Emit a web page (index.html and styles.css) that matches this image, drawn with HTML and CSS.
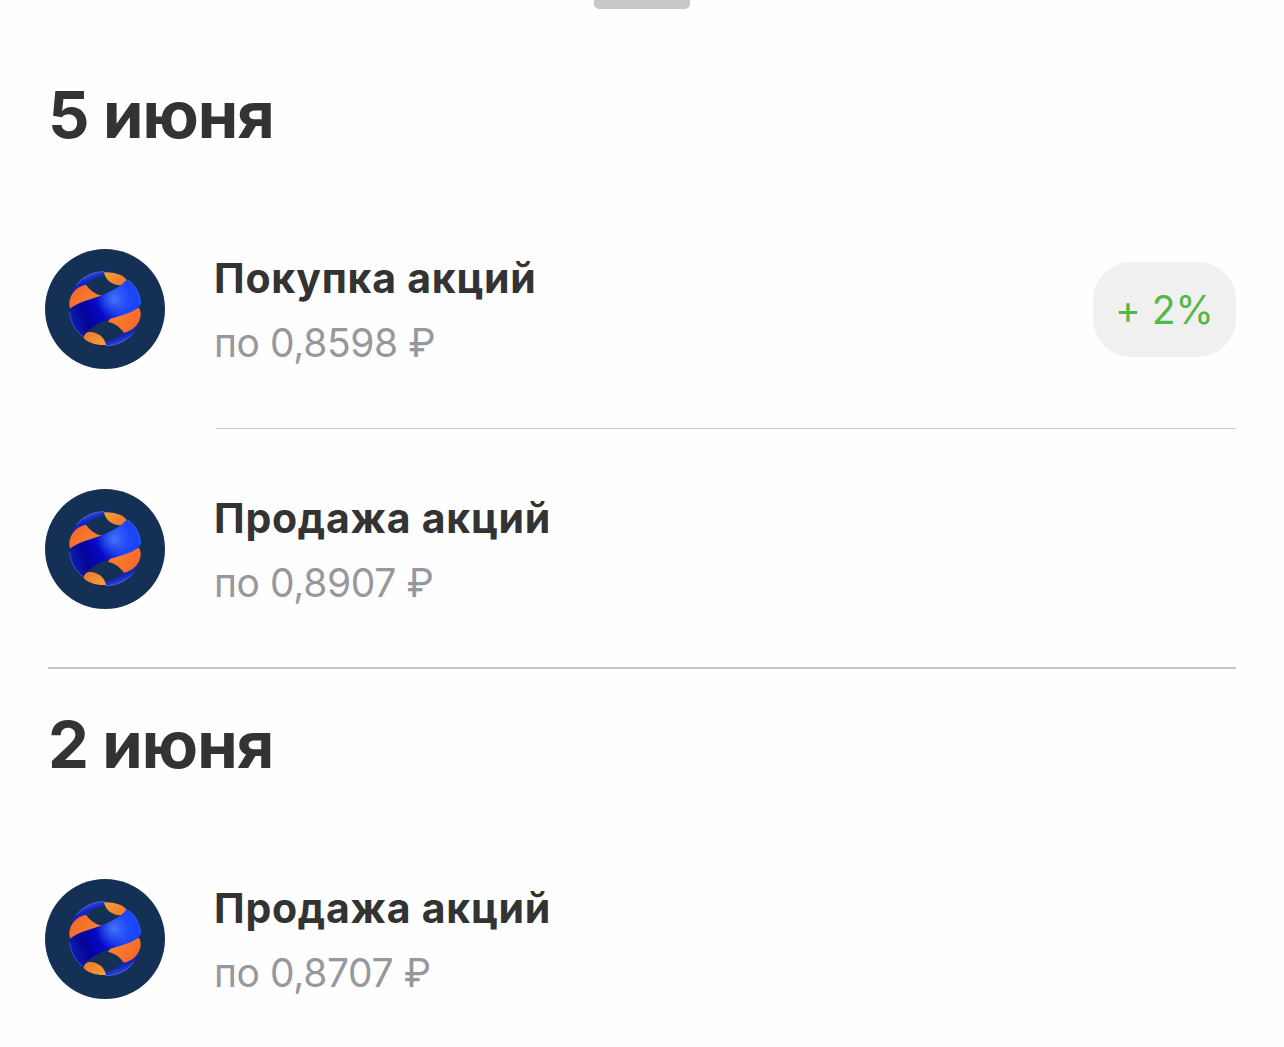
FILE: index.html
```html
<!DOCTYPE html>
<html lang="ru">
<head>
    <meta charset="UTF-8">
    <meta name="viewport" content="width=device-width, initial-scale=1.0">
    <title>История операций</title>
    <link rel="stylesheet" href="styles.css">
</head>
<body>
    <svg class="sprite" width="0" height="0">
        <defs>
            <linearGradient id="orange" x1="0" y1="0" x2="1" y2="0.6">
                <stop offset="0" stop-color="#f5602a"/>
                <stop offset="1" stop-color="#f88430"/>
            </linearGradient>
            <linearGradient id="orangeTop" x1="0" y1="0" x2="1" y2="0.6">
                <stop offset="0" stop-color="#f5a238"/>
                <stop offset="1" stop-color="#f07a2c"/>
            </linearGradient>
            <linearGradient id="band" gradientUnits="userSpaceOnUse" x1="110" y1="250" x2="315" y2="170">
                <stop offset="0" stop-color="#0d1fa8"/>
                <stop offset="0.2" stop-color="#04049a"/>
                <stop offset="0.42" stop-color="#0608c4"/>
                <stop offset="0.7" stop-color="#1f45f0"/>
                <stop offset="1" stop-color="#1746ff"/>
            </linearGradient>
            <radialGradient id="shine" gradientUnits="userSpaceOnUse" cx="238" cy="180" r="58">
                <stop offset="0" stop-color="#4775fb"/>
                <stop offset="1" stop-color="#2a55ff" stop-opacity="0"/>
            </radialGradient>
            <linearGradient id="edge" x1="0" y1="0" x2="0.5" y2="1">
                <stop offset="0" stop-color="#5573ee"/>
                <stop offset="0.5" stop-color="#1428c0"/>
                <stop offset="1" stop-color="#0a0f96"/>
            </linearGradient>
            <symbol id="globe" viewBox="30 30 360 360">
                <circle cx="210" cy="210" r="180" fill="#143054"/>
                <g id="cap">
                    <path fill="url(#edge)" d="M106 172C118 126 160 96 211 97L214 109C190 112 169 122 154 138C134 142 116 152 106 172Z"/>
                    <path fill="url(#orange)" d="M103 190C105 166 124 142 153 137C165 154 180 165 201 170L190 185L108 212C104 204 102 198 103 190Z"/>
                    <path fill="url(#orangeTop)" d="M207 100C235 98 264 108 274 121C273 132 268 139 254 139C232 138 211 124 207 100Z"/>
                </g>
                <use href="#cap" transform="rotate(180 210 209)"/>
                <path fill="url(#band)" d="M103 211C128 188 172 181 212 164C240 152 264 138 275 121C301 135 314 160 318 193C318 198 312 204 303 211C275 230 225 236 190 254C168 265 150 280 146 294C121 276 104 248 103 211Z"/>
                <path fill="url(#shine)" d="M103 211C128 188 172 181 212 164C240 152 264 138 275 121C301 135 314 160 318 193C318 198 312 204 303 211C275 230 225 236 190 254C168 265 150 280 146 294C121 276 104 248 103 211Z"/>
                <path fill="none" stroke="#3d66f5" stroke-width="3" stroke-opacity="0.7" d="M104 220C107 250 121 276 146 294"/>
                <path fill="none" stroke="#3d66f5" stroke-width="3" stroke-opacity="0.7" d="M278 124C301 138 314 162 317 193"/>
                <path fill="none" stroke="#5a78e8" stroke-width="2.5" stroke-opacity="0.7" d="M125 138C145 112 175 98 208 98M295 280C275 306 245 320 212 320"/>
            </symbol>
        </defs>
    </svg>

    <div class="handle"></div>

    <main class="history">
        <section class="day">
            <h2>5 июня</h2>
            <div class="operation">
                <svg class="logo"><use href="#globe"/></svg>
                <div class="info">
                    <div class="text">
                        <div class="title">Покупка акций</div>
                        <div class="price">по 0,8598 ₽</div>
                    </div>
                    <div class="badge">+ 2%</div>
                </div>
            </div>
            <div class="operation">
                <svg class="logo"><use href="#globe"/></svg>
                <div class="info">
                    <div class="text">
                        <div class="title">Продажа акций</div>
                        <div class="price">по 0,8907 ₽</div>
                    </div>
                </div>
            </div>
        </section>
        <section class="day">
            <h2>2 июня</h2>
            <div class="operation">
                <svg class="logo"><use href="#globe"/></svg>
                <div class="info">
                    <div class="text">
                        <div class="title">Продажа акций</div>
                        <div class="price">по 0,8707 ₽</div>
                    </div>
                </div>
            </div>
        </section>
    </main>
</body>
</html>
```
FILE: styles.css
```css
* {
    box-sizing: border-box;
}
body {
    margin: 0;
    height: 1047px;
    overflow: hidden;
    background-color: #fefefe;
    color: #333;
    font-family: Inter, "Liberation Sans", sans-serif;
}
.sprite {
    display: block;
}
.handle {
    width: 96px;
    height: 9px;
    margin: 0 auto 30px;
    background-color: #c8c8c8;
    border-radius: 0 0 5px 5px;
}
.history {
    padding: 0 48px;
}
.day + .day {
    border-top: 2px solid #c8c8ca;
    margin-top: -2px;
}
h2 {
    height: 150px;
    margin: 0;
    padding-top: 36px;
    font-size: 65px;
    font-weight: 700;
    line-height: 80px;
    letter-spacing: -1px;
}
.operation {
    display: flex;
    align-items: center;
    height: 240px;
}
.logo {
    flex: none;
    width: 120px;
    height: 120px;
    margin-left: -3px;
    margin-right: 51px;
}
.info {
    flex: 1;
    display: flex;
    align-items: center;
    justify-content: space-between;
    height: 240px;
    padding-top: 2px;
    border-bottom: 1px solid #c8c8ca;
}
.operation:last-child .info {
    border-bottom: none;
}
.text {
    margin-left: -2px;
}
.title {
    font-size: 41px;
    font-weight: 700;
    line-height: 64px;
    letter-spacing: 0.75px;
    white-space: nowrap;
}
.price {
    padding-top: 1px;
    color: #96989e;
    font-size: 39px;
    line-height: 63px;
    letter-spacing: -0.4px;
    white-space: nowrap;
}
.badge {
    width: 143px;
    height: 95px;
    border-radius: 38px;
    background-color: #f0f0f0;
    color: #52b848;
    font-size: 39px;
    font-feature-settings: "calt" 0;
    line-height: 95px;
    text-align: center;
}
```
